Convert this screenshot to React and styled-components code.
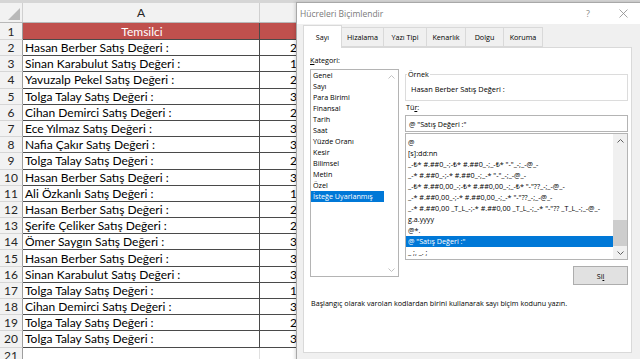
import React from 'react';
import styled, { createGlobalStyle } from 'styled-components';

const GlobalStyle = createGlobalStyle`
  html, body { margin: 0; padding: 0; }
  body { width: 640px; height: 359px; overflow: hidden; background: #fff; }
`;

const Page = styled.div`
  position: relative;
  width: 640px;
  height: 359px;
  overflow: hidden;
  background: #fff;
  font-family: Lato, "Liberation Sans", sans-serif;
`;

/* ---------- Spreadsheet ---------- */
const Sheet = styled.div`
  display: flex;
  flex-direction: column;
`;

const TopStrip = styled.div`
  height: 3px;
  background: #d6d6d6;
`;

const COLS = '23px 237px 40px';

const HeaderRow = styled.div`
  display: grid;
  grid-template-columns: ${COLS};
  height: 20px;
  background: #f2f2f2;
  border-bottom: 1px solid #b8b8b8;
  box-sizing: border-box;
`;

const Corner = styled.div`
  display: flex;
  align-items: flex-end;
  justify-content: flex-end;
  padding: 0 2px 2px 0;
  border-right: 1px solid #d0d0d0;
  &::after {
    content: '';
    width: 0;
    height: 0;
    border-left: 12px solid transparent;
    border-bottom: 12px solid #b9b9b9;
  }
`;

const ColHead = styled.div`
  display: flex;
  align-items: center;
  justify-content: center;
  font-size: 12px;
  color: #262626;
  border-right: 1px solid #d0d0d0;
`;

const Row = styled.div`
  display: grid;
  grid-template-columns: ${COLS};
  height: ${(p) => p.$h}px;
`;

const RowHead = styled.div`
  display: flex;
  align-items: center;
  justify-content: center;
  background: #f2f2f2;
  color: #262626;
  font-size: 12px;
  border-bottom: 1px solid #d6d6d6;
  border-right: 1px solid #9e9e9e;
  box-sizing: border-box;
`;

const Cell = styled.div`
  display: flex;
  align-items: center;
  justify-content: ${(p) => (p.$center ? 'center' : 'flex-start')};
  padding: 0 0 0 ${(p) => (p.$num ? 30 : 2)}px;
  font-size: 12px;
  color: ${(p) => (p.$head ? '#fff' : '#000')};
  background: ${(p) => (p.$head ? '#c0504d' : '#fff')};
  border-right: 1px solid ${(p) => (p.$empty ? '#e0e0e0' : '#4a4a4a')};
  border-bottom: 1px solid ${(p) => (p.$empty ? '#e0e0e0' : '#4a4a4a')};
  box-sizing: border-box;
  white-space: nowrap;
  overflow: hidden;
`;

/* ---------- Dialog ---------- */
const Dialog = styled.div`
  position: absolute;
  left: 296px;
  top: 2px;
  width: 346px;
  height: 362px;
  box-sizing: border-box;
  border: 1px solid #a8a8a8;
  background: #f0f0f0;
  display: flex;
  flex-direction: column;
  font-family: "Open Sans", "Noto Sans", sans-serif;
  color: #000;
  font-size: 7.2px;
  box-shadow: -1px 0 3px rgba(0, 0, 0, 0.15);
`;

const TitleBar = styled.div`
  height: 21px;
  background: #fff;
  display: flex;
  align-items: center;
`;

const TitleText = styled.div`
  flex: 1;
  padding-left: 3px;
  font-size: 8.5px;
  color: #7a7a7a;
`;

const TitleButton = styled.div`
  width: ${(p) => p.$w}px;
  height: 100%;
  display: flex;
  align-items: center;
  justify-content: center;
  color: #8a8a8a;
  font-size: 9px;
`;

const Body = styled.div`
  display: flex;
  flex-direction: column;
  padding: 2px 9px 0 6px;
`;

const Tabs = styled.div`
  display: flex;
  align-items: flex-end;
  height: 21px;
  position: relative;
  z-index: 1;
`;

const Tab = styled.div`
  width: ${(p) => p.$w}px;
  height: ${(p) => (p.$active ? 23 : 20)}px;
  margin-bottom: ${(p) => (p.$active ? -1 : 0)}px;
  box-sizing: border-box;
  display: flex;
  align-items: center;
  justify-content: center;
  background: ${(p) => (p.$active ? '#fff' : '#f0f0f0')};
  border: 1px solid #d9d9d9;
  border-bottom: ${(p) => (p.$active ? 'none' : '1px solid #d9d9d9')};
  margin-left: ${(p) => (p.$first ? 0 : -1)}px;
  font-size: 7.2px;
`;

const Panel = styled.div`
  height: 306px;
  box-sizing: border-box;
  background: #fff;
  border: 1px solid #d9d9d9;
  padding: 7px 0 0 6px;
  display: flex;
  flex-direction: column;
`;

const Upper = styled.div`
  display: grid;
  grid-template-columns: 89px 223px;
  column-gap: 6px;
`;

const Column = styled.div`
  display: flex;
  flex-direction: column;
`;

const Label = styled.div`
  height: 10px;
  line-height: 10px;
  padding-left: ${(p) => p.$pad || 0}px;
  margin-top: ${(p) => p.$mt || 0}px;
  font-size: 7.2px;
`;

const U = styled.span`
  text-decoration: underline;
  text-underline-offset: 1px;
`;

const ListBox = styled.div`
  margin-top: ${(p) => p.$mt || 0}px;
  height: ${(p) => p.$h}px;
  box-sizing: border-box;
  border: 1px solid #b4b4b4;
  display: flex;
  overflow: hidden;
  background: #fff;
`;

const Items = styled.div`
  flex: 1;
  padding-top: ${(p) => p.$pt || 0}px;
  overflow: hidden;
`;

const Item = styled.div`
  height: 11px;
  line-height: 11px;
  padding-left: 2px;
  white-space: nowrap;
  overflow: hidden;
  font-size: 7.2px;
  color: ${(p) => (p.$sel ? '#fff' : '#000')};
  background: ${(p) => (p.$sel ? '#0078d7' : 'transparent')};
`;

const ScrollBar = styled.div`
  width: ${(p) => p.$w}px;
  display: flex;
  flex-direction: column;
  align-items: center;
  background: ${(p) => p.$bg || '#fff'};
`;

const ScrollArrow = styled.div`
  height: 13px;
  width: 100%;
  display: flex;
  align-items: center;
  justify-content: center;
`;

const Track = styled.div`
  flex: 1;
  width: 100%;
  display: flex;
  flex-direction: column;
  justify-content: flex-end;
`;

const Thumb = styled.div`
  height: ${(p) => p.$h}px;
  width: 100%;
  margin-bottom: ${(p) => p.$mb}px;
  background: #cdcdcd;
`;

const Group = styled.fieldset`
  margin: 14px 0 0 0;
  padding: 2px 4px 5px 5px;
  border: 1px solid #dcdcdc;
  min-width: 0;
  height: 32px;
  box-sizing: border-box;
  legend {
    padding: 0 1px;
    margin-left: -4px;
    font-size: 7.2px;
    line-height: 10px;
    color: #000;
  }
`;

const Sample = styled.div`
  font-size: 7.4px;
  line-height: 10px;
  padding-top: 3px;
`;

const TextBox = styled.div`
  margin-top: 3px;
  height: 17px;
  box-sizing: border-box;
  border: 1px solid #b4b4b4;
  display: flex;
  align-items: center;
  padding-left: 3px;
  font-size: 7.2px;
`;

const ButtonRow = styled.div`
  display: flex;
  justify-content: flex-end;
  margin-top: 6px;
`;

const Button = styled.div`
  width: 55px;
  height: 19px;
  box-sizing: border-box;
  background: #e1e1e1;
  border: 1px solid #adadad;
  display: flex;
  align-items: center;
  justify-content: center;
  font-size: 7.2px;
`;

const Hint = styled.div`
  margin-top: 13px;
  padding-left: 1px;
  font-size: 7.2px;
  line-height: 10px;
`;

const Up = ({ c }) => (
  <svg width="7" height="4" viewBox="0 0 7 4">
    <polyline points="0.5,3.5 3.5,0.5 6.5,3.5" fill="none" stroke={c} strokeWidth="1" />
  </svg>
);
const Down = ({ c }) => (
  <svg width="7" height="4" viewBox="0 0 7 4">
    <polyline points="0.5,0.5 3.5,3.5 6.5,0.5" fill="none" stroke={c} strokeWidth="1" />
  </svg>
);

/* column B only shows the leading digit of each value; the rest lies under the dialog */
const data = [
  ['Hasan Berber Satış Değeri :', '2'],
  ['Sinan Karabulut Satış Değeri :', '1'],
  ['Yavuzalp Pekel Satış Değeri :', '2'],
  ['Tolga Talay Satış Değeri :', '3'],
  ['Cihan Demirci Satış Değeri :', '2'],
  ['Ece Yılmaz Satış Değeri :', '3'],
  ['Nafia Çakır Satış Değeri :', '3'],
  ['Tolga Talay Satış Değeri :', '2'],
  ['Hasan Berber Satış Değeri :', '3'],
  ['Ali Özkanlı Satış Değeri :', '1'],
  ['Hasan Berber Satış Değeri :', '2'],
  ['Şerife Çeliker Satış Değeri :', '2'],
  ['Ömer Saygın Satış Değeri :', '3'],
  ['Hasan Berber Satış Değeri :', '3'],
  ['Sinan Karabulut Satış Değeri :', '3'],
  ['Tolga Talay Satış Değeri :', '1'],
  ['Cihan Demirci Satış Değeri :', '3'],
  ['Tolga Talay Satış Değeri :', '2'],
  ['Tolga Talay Satış Değeri :', '3'],
];

const categories = [
  'Genel', 'Sayı', 'Para Birimi', 'Finansal', 'Tarih', 'Saat', 'Yüzde Oranı',
  'Kesir', 'Bilimsel', 'Metin', 'Özel', 'İsteğe Uyarlanmış',
];

const formats = [
  '@',
  '[s]:dd:nn',
  '_-₺* #.##0_-;-₺* #.##0_-;_-₺* "-"_-;_-@_-',
  '_-* #.##0_-;-* #.##0_-;_-* "-"_-;_-@_-',
  '_-₺* #.##0,00_-;-₺* #.##0,00_-;_-₺* "-"??_-;_-@_-',
  '_-* #.##0,00_-;-* #.##0,00_-;_-* "-"??_-;_-@_-',
  '_-* #.##0,00 _T_L_-;-* #.##0,00 _T_L_-;_-* "-"?? _T_L_-;_-@_-',
  'g.a.yyyy',
  '@*.',
  '@ "Satış Değeri :"',
  '_ ;, _. ;',
];

const tabs = [
  ['Sayı', 39],
  ['Hizalama', 43],
  ['Yazı Tipi', 44],
  ['Kenarlık', 40],
  ['Dolgu', 39],
  ['Koruma', 40],
];

export default function App() {
  return (
    <Page>
      <GlobalStyle />
      <Sheet>
        <TopStrip />
        <HeaderRow>
          <Corner />
          <ColHead>A</ColHead>
          <ColHead />
        </HeaderRow>
        <Row $h={17}>
          <RowHead>1</RowHead>
          <Cell $head $center>Temsilci</Cell>
          <Cell $head />
        </Row>
        {data.map(([name, val], i) => (
          <Row key={i} $h={16.2}>
            <RowHead>{i + 2}</RowHead>
            <Cell>{name}</Cell>
            <Cell $num>{val}</Cell>
          </Row>
        ))}
        <Row $h={16.2}>
          <RowHead>21</RowHead>
          <Cell $empty />
          <Cell $empty />
        </Row>
      </Sheet>

      <Dialog>
        <TitleBar>
          <TitleText>Hücreleri Biçimlendir</TitleText>
          <TitleButton $w={34}>?</TitleButton>
          <TitleButton $w={36}>
            <svg width="9" height="9" viewBox="0 0 9 9">
              <path d="M0.5 0.5 L8.5 8.5 M8.5 0.5 L0.5 8.5" stroke="#8a8a8a" strokeWidth="0.8" />
            </svg>
          </TitleButton>
        </TitleBar>
        <Body>
          <Tabs>
            {tabs.map(([t, w], i) => (
              <Tab key={t} $w={w} $active={i === 0} $first={i === 0}>{t}</Tab>
            ))}
          </Tabs>
          <Panel>
            <Upper>
              <Column>
                <Label><U>K</U>ategori:</Label>
                <ListBox $mt={4} $h={208}>
                  <Items $pt={0}>
                    {categories.map((c, i) => (
                      <Item key={c} $sel={i === categories.length - 1}>{c}</Item>
                    ))}
                  </Items>
                  <ScrollBar $w={14}>
                    <ScrollArrow><Up c="#c2c2c2" /></ScrollArrow>
                    <Track />
                    <ScrollArrow><Down c="#c2c2c2" /></ScrollArrow>
                  </ScrollBar>
                </ListBox>
              </Column>
              <Column>
                <Group>
                  <legend>Örnek</legend>
                  <Sample>Hasan Berber Satış Değeri :</Sample>
                </Group>
                <Label $mt={1} $pad={1}>Tü<U>r</U>:</Label>
                <TextBox>@ "Satış Değeri :"</TextBox>
                <ListBox $mt={1} $h={127}>
                  <Items $pt={3}>
                    {formats.map((f, i) => (
                      <Item key={i} $sel={i === 9}>{f}</Item>
                    ))}
                  </Items>
                  <ScrollBar $w={14} $bg="#f0f0f0">
                    <ScrollArrow><Up c="#606060" /></ScrollArrow>
                    <Track>
                      <Thumb $h={26} $mb={0} />
                    </Track>
                    <ScrollArrow><Down c="#606060" /></ScrollArrow>
                  </ScrollBar>
                </ListBox>
                <ButtonRow>
                  <Button>Si<U>l</U></Button>
                </ButtonRow>
              </Column>
            </Upper>
            <Hint>Başlangıç olarak varolan kodlardan birini kullanarak sayı biçim kodunu yazın.</Hint>
          </Panel>
        </Body>
      </Dialog>
    </Page>
  );
}
